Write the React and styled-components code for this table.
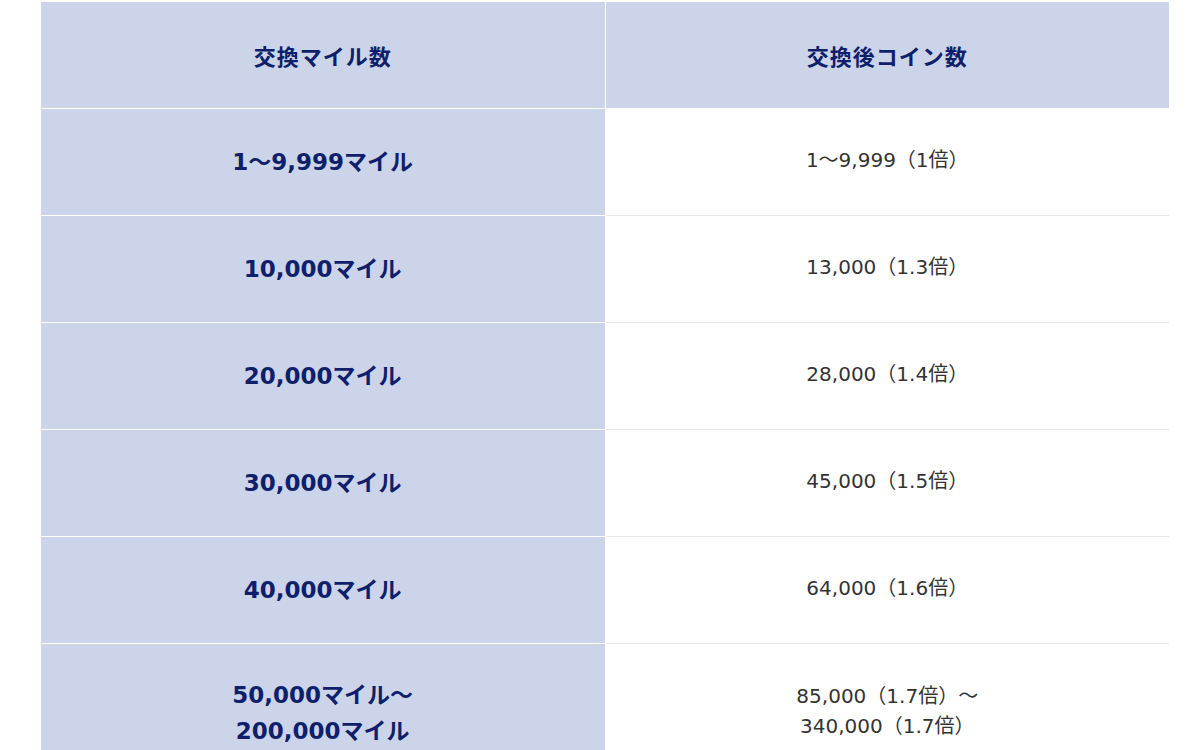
import React from "react";
import styled, { createGlobalStyle } from "styled-components";

const GlobalStyle = createGlobalStyle`
  body {
    margin: 0;
    background: #ffffff;
    font-family: "DejaVu Sans", "Noto Sans CJK JP", sans-serif;
  }
`;

const Page = styled.div`
  padding: 2px 31px 0 41px;
`;

const Table = styled.table`
  width: 1128px;
  border-collapse: collapse;
  table-layout: fixed;
`;

const Row = styled.tr`
  height: ${(p) => (p.$tall ? "138px" : "107px")};
`;

const HeadCell = styled.th`
  height: 106px;
  padding: 0;
  background: #cbd4e8;
  color: #0f1f6b;
  font-size: 22px;
  letter-spacing: 1px;
  font-weight: 700;
  text-align: center;
  vertical-align: middle;
  border-bottom: 1px solid #ffffff;
  border-right: ${(p) => (p.$first ? "1px solid #ffffff" : "none")};
`;

const MileCell = styled.td`
  padding: 0;
  background: #cbd4e8;
  color: #0f1f6b;
  font-size: 23px;
  font-weight: 700;
  line-height: 36px;
  text-align: center;
  vertical-align: middle;
  border-bottom: 1px solid #ffffff;
  border-right: 1px solid #ffffff;
`;

const CoinCell = styled.td`
  padding: 0 0 4px;
  background: #ffffff;
  color: #333333;
  font-size: 20px;
  line-height: 30px;
  text-align: center;
  vertical-align: middle;
  border-bottom: 1px solid #e6e6e6;
`;

const rows = [
  { miles: ["1～9,999マイル"], coins: ["1～9,999（1倍）"] },
  { miles: ["10,000マイル"], coins: ["13,000（1.3倍）"] },
  { miles: ["20,000マイル"], coins: ["28,000（1.4倍）"] },
  { miles: ["30,000マイル"], coins: ["45,000（1.5倍）"] },
  { miles: ["40,000マイル"], coins: ["64,000（1.6倍）"] },
  {
    miles: ["50,000マイル～", "200,000マイル"],
    coins: ["85,000（1.7倍）～", "340,000（1.7倍）"],
  },
];

const lines = (arr) =>
  arr.map((t, i) => (
    <React.Fragment key={i}>
      {i > 0 && <br />}
      {t}
    </React.Fragment>
  ));

export default function App() {
  return (
    <Page>
      <GlobalStyle />
      <Table>
        <thead>
          <tr>
            <HeadCell $first>交換マイル数</HeadCell>
            <HeadCell>交換後コイン数</HeadCell>
          </tr>
        </thead>
        <tbody>
          {rows.map((r, i) => (
            <Row key={i} $tall={r.miles.length > 1}>
              <MileCell>{lines(r.miles)}</MileCell>
              <CoinCell>{lines(r.coins)}</CoinCell>
            </Row>
          ))}
        </tbody>
      </Table>
    </Page>
  );
}
